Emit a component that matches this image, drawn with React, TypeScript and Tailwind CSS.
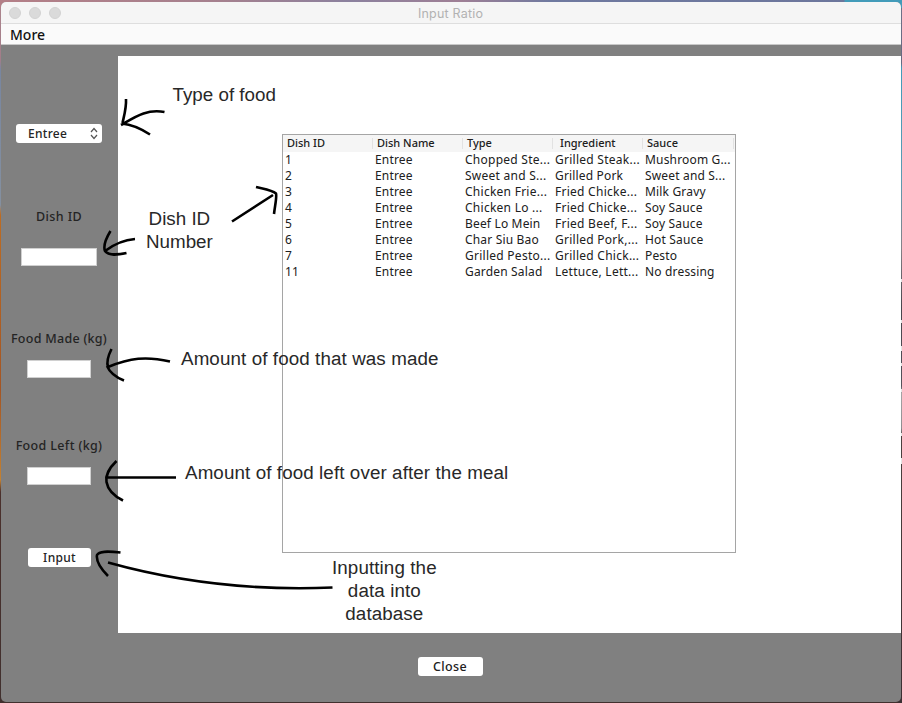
import type { ReactNode } from "react";

const columns = ["Dish ID", "Dish Name", "Type", "Ingredient", "Sauce"];
const headerPad = ["pl-[4px]", "pl-[4px]", "pl-[4px]", "pl-[7px]", "pl-[4px]"];

const rows = [
  ["1", "Entree", "Chopped Ste...", "Grilled Steak...", "Mushroom G..."],
  ["2", "Entree", "Sweet and S...", "Grilled Pork", "Sweet and S..."],
  ["3", "Entree", "Chicken Frie...", "Fried Chicke...", "Milk Gravy"],
  ["4", "Entree", "Chicken Lo ...", "Fried Chicke...", "Soy Sauce"],
  ["5", "Entree", "Beef Lo Mein", "Fried Beef, F...", "Soy Sauce"],
  ["6", "Entree", "Char Siu Bao", "Grilled Pork,...", "Hot Sauce"],
  ["7", "Entree", "Grilled Pesto...", "Grilled Chick...", "Pesto"],
  ["11", "Entree", "Garden Salad", "Lettuce, Lett...", "No dressing"],
];

const arrows = [
  "M126 99 C126.500 108 124 116 122.500 123 M121 125 C135 117 147 108.500 164.500 112 M122 123.500 C132 124.500 140 128 150 134.500",
  "M110.500 231 C105 240 103.500 247 105 251 C113 245 122 240 135 239 M105 251 C109 256 117 255 126.500 253",
  "M232 221.500 L273 195 M256 187 C264 189 272 190 276 193.500 C277 197 275 205 274 214",
  "M111.500 349 C107.500 357 107 364 108 367 C130 358 146 356 170 361.500 M107 366 C110 373 115 377 124 380.500",
  "M116.500 461 C108 469 105.500 477 106.500 482 C108 491 114 496 123 500.500 M107 477.500 L176 477.500",
  "M120.500 552.500 C107 551 99 551 97 555 C96 561 101 569 108 576 M108 562.500 C178 582 250 591 332.500 587.500",
];

function Label({ children, className }: { children: ReactNode; className: string }) {
  return <div className={`whitespace-nowrap text-center leading-4 ${className}`}>{children}</div>;
}

function Note({ children, className }: { children: ReactNode; className: string }) {
  return (
    <div
      className={`absolute whitespace-nowrap text-center font-['Liberation_Sans',sans-serif] text-[18.8px] leading-[23px] text-[#282828] ${className}`}
    >
      {children}
    </div>
  );
}

export default function App() {
  return (
    <div className="relative h-[703px] w-[902px] overflow-hidden bg-[linear-gradient(180deg,#ad858d_0px,#a27d89_60px,#7886a0_70px,#8490a0_205px,#bd6c22_215px,#a45523_390px,#c38132_480px,#4b302c_492px,#41302e_703px)] font-['Noto_Sans',sans-serif] text-xs text-[#202020]">
      <div className="absolute inset-x-0 top-0 h-2 bg-[linear-gradient(90deg,#b47f87_0px,#a5808e_220px,#8b819e_350px,#9f7f95_460px,#6f799f_550px,#6c769c_844px,#429bb9_845px)]" />
      <div className="absolute right-0 top-2 flex h-[695px] w-1 flex-col bg-[linear-gradient(180deg,#6c7188_0px,#666980_55px,#429bb9_60px,#5b9bb2_170px,#858187_240px,#49454d_300px,#55515a_378px,#a5a3a5_385px,#8f8d90_420px,#4b403f_428px,#3c3033_695px)]">
        <span className="mt-[271px] h-[3px] bg-[#e5e5e5]" />
        <span className="mt-[38px] h-[3px] bg-[#e5e5e5]" />
        <span className="mt-[23px] h-[5px] bg-[#e5e5e5]" />
        <span className="mt-[12px] h-[3px] bg-[#e5e5e5]" />
        <span className="mt-[23px] h-[3px] bg-[#e5e5e5]" />
        <span className="mt-[41px] h-[3px] bg-[#e5e5e5]" />
        <span className="mt-[22px] h-[6px] bg-[#e5e5e5]" />
      </div>
      <div className="relative ml-px flex h-[702px] w-[900px] flex-col pt-[2px]">
        <div className="flex min-h-0 flex-1 flex-col overflow-hidden rounded-[5px] bg-[#808080]">
          <header className="grid h-[22px] shrink-0 grid-cols-[1fr_auto_1fr] items-center border-b border-[#dedede] bg-[#f5f5f5]">
            <div className="flex gap-2 pl-[8px]">
              {[0, 1, 2].map((i) => (
                <span key={i} className="size-3 rounded-full border border-[#d2d2d2] bg-[#dadada]" />
              ))}
            </div>
            <div className="pr-px pt-[2px] font-['Inter',sans-serif] text-[12.5px] leading-[19px] tracking-[0.2px] text-[#b2b2b2]">Input Ratio</div>
            <div />
          </header>
          <nav className="flex h-[21px] shrink-0 items-center border-b border-[#c8c8c8] bg-[#fafafa] pl-[9px] pt-[2px] text-[14px] font-medium text-[#111]">
            More
          </nav>
          <div className="flex h-[588px] shrink-0">
            <aside className="flex w-[117px] shrink-0 flex-col items-center pr-px pt-[79px] text-[12px] font-medium tracking-[0.3px] text-[#242424]">
              <div className="flex h-[19px] w-[86px] items-center justify-between rounded-[3px] bg-white pl-3 pr-1 text-[12px]">
                Entree
                <svg viewBox="0 0 8 13" className="h-[13px] w-2" fill="none" stroke="#555" strokeWidth="1.2">
                  <path d="M1 5 4 1.5 7 5M1 8l3 3.5L7 8" />
                </svg>
              </div>
              <Label className="mt-[66px] text-[12.5px] tracking-[0.4px]">Dish ID</Label>
              <div className="mt-[23px] h-[18px] w-[76px] border border-[#d0d0d0] bg-white" />
              <Label className="mt-[65px] text-[12.5px] tracking-[0.27px]">Food Made (kg)</Label>
              <div className="mt-[13px] h-[18px] w-[64px] border border-[#d0d0d0] bg-white" />
              <Label className="mt-[60px] text-[12.5px] tracking-[0.35px]">Food Left (kg)</Label>
              <div className="mt-[13px] h-[18px] w-[64px] border border-[#d0d0d0] bg-white" />
              <button className="ml-px mt-[63px] h-[19px] w-[63px] rounded-[3px] bg-white leading-[19px]">Input</button>
            </aside>
            <main className="mt-[11px] h-[577px] flex-1 bg-white pl-[164px] pt-[78px]">
              <div className="h-[419px] w-[454px] border border-[#a5a5a5]">
                <div className="grid h-[17px] grid-cols-[90px_90px_90px_90px_91px] bg-[#f5f5f5] py-[3px] text-[11px] font-medium leading-[10px]">
                  {columns.map((c, i) => (
                    <div key={c} className={`border-r border-[#e2e2e2] ${headerPad[i]}`}>{c}</div>
                  ))}
                </div>
                {rows.map((row) => (
                  <div key={row[0]} className="grid h-4 grid-cols-[90px_90px_90px_90px_91px] text-[12px] leading-4 tracking-[0.17px]">
                    {row.map((cell, i) => (
                      <div key={i} className={i > 1 && i < 4 && cell.endsWith("...") ? "whitespace-pre pl-[2px] tracking-[0.26px]" : "whitespace-pre pl-[2px]"}>{cell}</div>
                    ))}
                  </div>
                ))}
              </div>
            </main>
          </div>
          <footer className="flex flex-1 items-start justify-center pr-[2px] pt-[24px]">
            <button className="h-[19px] w-[65px] rounded-[3px] bg-white text-[12.5px] font-medium leading-[19px] tracking-[0.4px]">Close</button>
          </footer>
        </div>
      </div>
      <Note className="left-[172.500px] top-[83px]">Type of food</Note>
      <Note className="left-[146px] top-[207px]">Dish ID<br />Number</Note>
      <Note className="left-[181px] top-[347px] tracking-[0.1px]">Amount of food that was made</Note>
      <Note className="left-[185px] top-[461px] tracking-[0.1px]">Amount of food left over after the meal</Note>
      <Note className="left-[332px] top-[556px] tracking-[0.1px]">Inputting the<br />data into<br />database</Note>
      <svg className="pointer-events-none absolute inset-0" width="902" height="703" fill="none" stroke="#000" strokeWidth="2.6" strokeLinejoin="round">
        {arrows.map((d) => (
          <path key={d} d={d} />
        ))}
      </svg>
    </div>
  );
}
